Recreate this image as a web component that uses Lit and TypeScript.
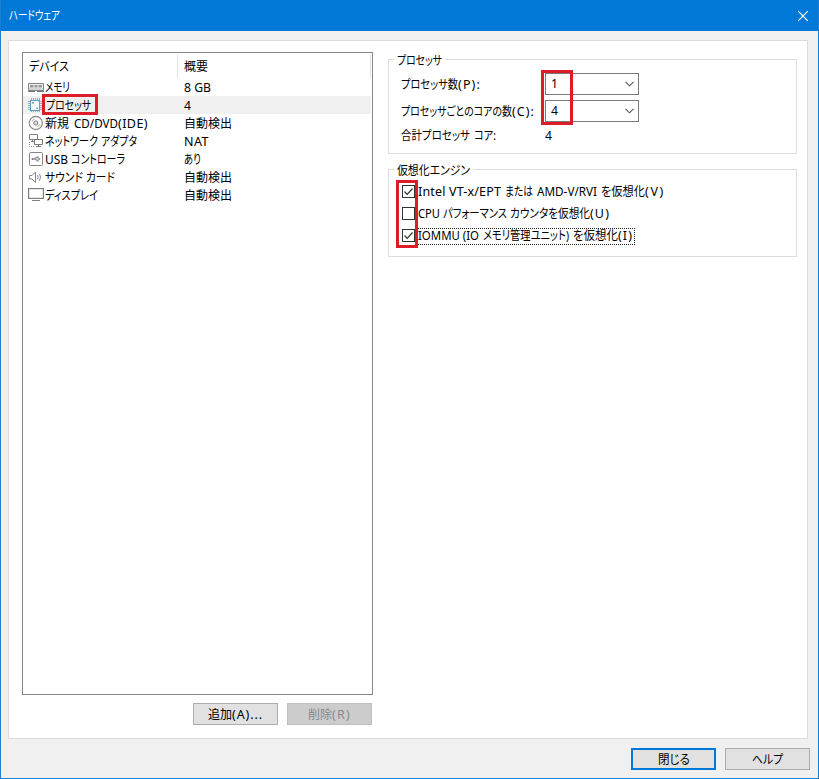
import { LitElement, html, css, svg } from "lit";
import { customElement, property } from "lit/decorators.js";

/** A run of text: content, start and end measured from the line's left edge. */
type Run = [string, number, number];

/** Sets its text to a given width: long text is condensed, short text is tracked out. */
@customElement("fit-run")
class FitRun extends LitElement {
  @property() text = "";
  @property({ type: Number }) width = 0;
  static styles = css`
    :host { display: block; flex: none; white-space: pre; }
    .ink { display: inline-block; transform-origin: 0 50%; }
  `;
  firstUpdated() {
    const ink = this.renderRoot.querySelector(".ink") as HTMLElement;
    const natural = ink.getBoundingClientRect().width;
    if (natural > this.width) ink.style.transform = `scaleX(${this.width / natural})`;
    else if (this.text.length > 1) ink.style.letterSpacing = `${(this.width - natural) / this.text.length}px`;
  }
  render() {
    this.style.width = `${this.width}px`;
    return html`<span class="ink">${this.text}</span>`;
  }
}

@customElement("text-line")
class TextLine extends LitElement {
  @property({ attribute: false }) runs: Run[] = [];
  static styles = css`
    :host { display: flex; flex: none; line-height: 18px; height: 18px; }
  `;
  render() {
    let end = 0;
    return this.runs.map(([text, from, to]) => {
      const gap = from - end;
      end = to;
      return html`<fit-run style="margin-left:${gap}px" .text=${text} .width=${to - from}></fit-run>`;
    });
  }
}

const line = (...runs: Run[]) => html`<text-line .runs=${runs}></text-line>`;

const icons = {
  memory: svg`
    <path d="M.5 4.500h15v7H.5z" fill="#eee" stroke="#858585"/>
    <path d="M2 6h3.500v2.500H2zM6.500 6h3v2.500h-3zM10.500 6H14v2.500h-3.500z" fill="#999"/>
    <path d="M0 12.500h7M9 12.500h7" stroke="#777"/><path d="M1 10h14" stroke="#bbb"/>`,
  cpu: svg`
    <path d="M3.500 1v14M5.500 1v14M7.500 1v14M9.500 1v14M11.500 1v14M0 4.500h14M0 6.500h14M0 8.500h14M0 10.500h14M0 12.500h14" stroke="#8fa3b3" stroke-width=".9"/>
    <rect x="2.500" y="3.500" width="9" height="10" fill="#f4f9fd" stroke="#5f9fca"/>
    <path d="M4 5h2v1.500H4zM8.500 10.500h1.500V12H8.500z" fill="#6c9cba"/>`,
  disc: svg`
    <circle cx="7.800" cy="8" r="6.600" fill="#fafafa" stroke="#858585" stroke-width="1.100"/>
    <circle cx="7.800" cy="8" r="2" fill="none" stroke="#777"/><circle cx="7.800" cy="8" r=".6" fill="#777"/>
    <path d="M4 6.500a4.200 4.200 0 0 1 2.500-2.400M11.600 9.500a4.200 4.200 0 0 1-2.500 2.400" fill="none" stroke="#aaa"/>`,
  network: svg`
    <path d="M1.500 1.500h8v5h-8zM3 8.500h3M4.500 6.500v2" fill="none" stroke="#808080"/>
    <path d="M6.500 6.500h8v5h-8z" fill="#fff" stroke="#777"/><path d="M10.500 11.500v2M8 13.500h5" stroke="#777"/>
    <path d="M1.500 9v4.500H7" fill="none" stroke="#888" stroke-dasharray="1 1"/>`,
  usb: svg`
    <rect x="1.500" y="1.500" width="13" height="13" rx="1" fill="#fff" stroke="#858585"/>
    <path d="M4 8h7.500M6 8l1.500-1.800h2M7 8l1.500 1.800h1.200" fill="none" stroke="#777" stroke-width=".9"/>
    <circle cx="4.500" cy="8" r="1" fill="#777"/><path d="M9.300 5.500h1.400V7H9.300zM9.500 9.200h1.300v1.300H9.500zM11 7l1.600 1-1.600 1z" fill="#777"/>`,
  sound: svg`
    <path d="M1.500 6.500h2.500l3.500-3.500v10.500l-3.500-3.500h-2.500z" fill="#fff" stroke="#858585"/>
    <path d="M9.500 6.200q1.200 2 0 4M11.500 4.800q2 3.400 0 6.800" fill="none" stroke="#858585"/>`,
  display: svg`
    <rect x=".6" y="1.600" width="14.800" height="9.800" fill="#fff" stroke="#808080" stroke-width="1.200"/>
    <path d="M4 13.500h8" stroke="#808080"/>`,
};

interface Device { icon: keyof typeof icons; name: Run[]; summary: Run[]; active?: boolean }

const AUTO: Run[] = [["自動検出", 0, 48]];
const devices: Device[] = [
  { icon: "memory", name: [["メモリ", 0, 25]], summary: [["8 GB", 0, 27]] },
  { icon: "cpu", name: [["プロセッサ", 1, 46]], summary: [["4", 0, 7]], active: true },
  { icon: "disc", name: [["新規", 0, 24], ["CD/DVD", 29, 73], ["(IDE)", 73, 103]], summary: AUTO },
  { icon: "network", name: [["ネットワーク", 0, 53], ["アダプタ", 56, 92]], summary: [["NAT", 0, 25]] },
  { icon: "usb", name: [["USB", 0, 23], ["コントローラ", 26, 80]], summary: [["あり", 0, 17]] },
  { icon: "sound", name: [["サウンド", 0, 38], ["カード", 41, 70]], summary: AUTO },
  { icon: "display", name: [["ディスプレイ", 0, 53]], summary: AUTO },
];

const checks: { on: boolean; focus?: boolean; runs: Run[] }[] = [
  { on: true, runs: [["Intel VT-x/EPT", 0, 83], ["または", 87, 115], ["AMD-V/RVI", 119, 179], ["を仮想化", 183, 227], ["(V)", 227, 247]] },
  { on: false, runs: [["CPU", 0, 22], ["パフォーマンス", 25, 89], ["カウンタを仮想化", 92, 172], ["(U)", 172, 192]] },
  { on: true, focus: true, runs: [["IOMMU (IO", 0, 61], ["メモリ管理ユニット)", 65, 151], ["を仮想化", 155, 200], ["(I)", 200, 215]] },
];

@customElement("app-root")
class AppRoot extends LitElement {
  static styles = css`
    :host {
      display: flex; flex-direction: column; box-sizing: border-box;
      width: 819px; height: 779px; overflow: hidden;
      background: #f0f0f0; color: #000; border: 1px solid #1a7fd0; border-top: 0;
      font: 12.5px/18px "Noto Sans", "Noto Sans CJK JP", sans-serif;
      font-feature-settings: "palt";
    }
    * { box-sizing: border-box; }
    .title { height: 31px; flex: none; background: #0078d7; color: #fff; display: flex; align-items: center; justify-content: space-between; padding: 0 10px 0 9px; margin: 0 -1px; }
    .title svg { display: block; }
    .panel { margin: 9px 10px 0 7px; height: 699px; flex: none; background: #fff; border: 1px solid #dcdcdc; display: flex; align-items: flex-start; padding: 11px 10px 0 13px; gap: 15px; }
    .left { width: 351px; flex: none; }
    .list { height: 643px; border: 1px solid #828790; }
    .head { height: 25px; display: flex; padding-top: 1px; }
    .head > div { height: 24px; padding: 4px 0 0 6px; border-right: 1px solid #e2e2e2; }
    .head .c1 { width: 155px; }
    .head .c2 { flex: 1; margin-right: 1px; }
    .row { height: 18px; display: flex; align-items: center; position: relative; margin-right: 1px; }
    .row.active { background: #f0f0f0; }
    .row svg { width: 16px; height: 16px; margin-left: 5px; flex: none; }
    .row text-line { margin-top: 2px; }
    .name { width: 140px; padding-left: 1px; flex: none; }
    .mark { position: absolute; border: 3px solid #dd1c2a; pointer-events: none; }
    .mark.device { left: 19px; top: -2px; width: 56px; height: 21px; }
    .mark.counts { left: 152px; top: 10px; width: 32px; height: 55px; }
    .mark.boxes { left: 7px; top: 10px; width: 22px; height: 68px; }
    .buttons { display: flex; justify-content: flex-end; gap: 9px; }
    .left .buttons { margin-top: 8px; padding-right: 1px; }
    .footer { padding: 9px 8px 0 0; }
    .btn { width: 85px; height: 22px; background: #e1e1e1; border: 1px solid #adadad; display: flex; align-items: center; justify-content: center; }
    .btn text-line { margin-top: 2px; }
    .btn.off { background: #ccc; border-color: #bfbfbf; color: #8a8a8a; }
    .btn.main { border: 2px solid #0078d7; }
    .right { flex: 1; padding-top: 7px; }
    .group { border: 1px solid #dcdcdc; position: relative; }
    .legend { position: absolute; left: 5px; top: -8px; background: #fff; padding: 0 3px; }
    .cpu { height: 95px; padding: 13px 0 0 12px; }
    .virt { height: 88px; margin-top: 15px; padding: 11px 0 0 13px; }
    .field { height: 22px; margin-bottom: 5px; display: grid; grid-template-columns: 144px 94px; align-items: center; }
    .field.total { margin-top: -3px; }
    .combo { height: 22px; border: 1px solid #7a7a7a; display: flex; align-items: center; justify-content: space-between; padding: 0 4px 0 5px; background: #fff; }
    .field > text-line { margin-top: 1px; }
    .check { height: 22px; display: flex; align-items: center; gap: 2px; }
    .check svg { flex: none; margin-top: -2px; }
    .caption { height: 17px; display: flex; align-items: center; padding-right: 1px; border: 1px dotted transparent; }
    .caption.focus { border-color: #222; }
    .caption text-line { margin-top: -1px; }
  `;

  render() {
    return html`
      <div class="title">
        ${line(["ハードウェア", 0, 51])}
        <svg width="12" height="12" viewBox="0 0 12 12"><path d="M1.200 1.200l9.600 9.600M10.800 1.200l-9.600 9.600" stroke="#fff" stroke-width="1.200"/></svg>
      </div>
      <div class="panel">
        <div class="left">
          <div class="list">
            <div class="head">
              <div class="c1">${line(["デバイス", 0, 40])}</div>
              <div class="c2">${line(["概要", 0, 24])}</div>
            </div>
            ${devices.map((d) => html`
              <div class="row ${d.active ? "active" : ""}">
                <svg viewBox="0 0 16 16">${icons[d.icon]}</svg>
                <div class="name">${line(...d.name)}</div>
                ${line(...d.summary)}
                ${d.active ? html`<div class="mark device"></div>` : ""}
              </div>`)}
          </div>
          <div class="buttons">
            <div class="btn">${line(["追加", 0, 24], ["(A)...", 24, 55])}</div>
            <div class="btn off">${line(["削除", 0, 24], ["(R)", 24, 43])}</div>
          </div>
        </div>
        <div class="right">
          <div class="group cpu">
            <div class="legend">${line(["プロセッサ", 0, 45])}</div>
            <div class="field">${line(["プロセッサ数", 0, 57], ["(P):", 57, 80])}${this.combo("1")}</div>
            <div class="field">${line(["プロセッサごとのコアの数", 0, 111], ["(C):", 111, 134])}${this.combo("4")}</div>
            <div class="field total">${line(["合計プロセッサ", 0, 69], ["コア:", 73, 95])}${line(["4", 0, 7])}</div>
            <div class="mark counts"></div>
          </div>
          <div class="group virt">
            <div class="legend">${line(["仮想化エンジン", 0, 73])}</div>
            ${checks.map((c) => html`
              <div class="check">
                <svg width="13" height="13" viewBox="0 0 13 13">
                  <rect x=".5" y=".5" width="12" height="12" fill="#fff" stroke="#333"/>
                  ${c.on ? svg`<path d="M2.500 6.500l2.700 2.800 5.300-5.800" fill="none" stroke="#333" stroke-width="1.200"/>` : ""}
                </svg>
                <div class="caption ${c.focus ? "focus" : ""}">${line(...c.runs)}</div>
              </div>`)}
            <div class="mark boxes"></div>
          </div>
        </div>
      </div>
      <div class="footer buttons">
        <div class="btn main">${line(["閉じる", 0, 32])}</div>
        <div class="btn">${line(["ヘルプ", 0, 31])}</div>
      </div>
    `;
  }

  private combo(value: string) {
    return html`<div class="combo">
      ${line([value, 0, 7])}
      <svg width="9" height="6" viewBox="0 0 9 6"><path d="M.5 .8l4 4 4-4" fill="none" stroke="#555" stroke-width="1.100"/></svg>
    </div>`;
  }
}
